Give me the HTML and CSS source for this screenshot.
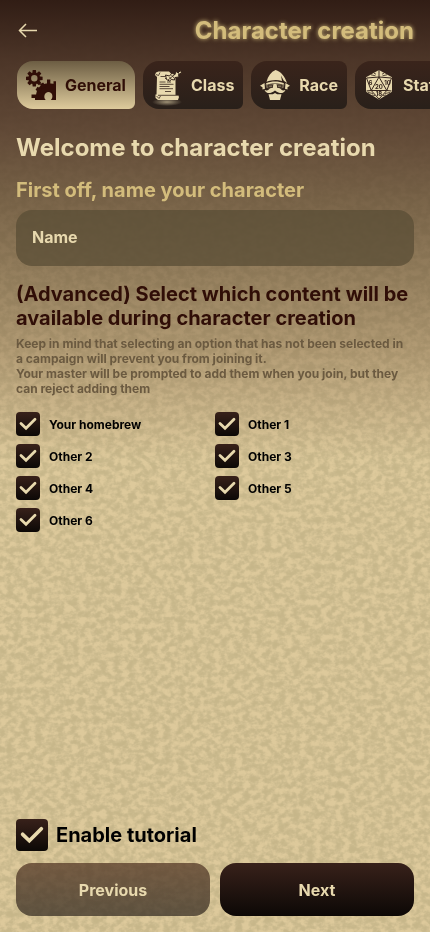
FILE: index.html
```html
<!DOCTYPE html>
<html lang="en">
<head>
<meta charset="utf-8">
<meta name="viewport" content="width=device-width, initial-scale=1">
<title>Character creation</title>
<link rel="stylesheet" href="styles.css">
</head>
<body>
<svg class="texture" aria-hidden="true">
  <filter id="parchment" x="0" y="0" width="100%" height="100%" color-interpolation-filters="sRGB">
    <feTurbulence type="fractalNoise" baseFrequency="0.14 0.17" numOctaves="3" seed="8"/>
    <feColorMatrix values="1 0 0 0 0  1 0 0 0 0  1 0 0 0 0  0 0 0 0 1"/>
    <feComponentTransfer>
      <feFuncR type="table" tableValues="0.78 0.78 0.78 0.785 0.795 0.82 0.85 0.87 0.87 0.87 0.87"/>
      <feFuncG type="table" tableValues="0.715 0.715 0.715 0.72 0.73 0.75 0.775 0.79 0.79 0.79 0.79"/>
      <feFuncB type="table" tableValues="0.54 0.54 0.54 0.545 0.555 0.575 0.595 0.61 0.61 0.61 0.61"/>
    </feComponentTransfer>
  </filter>
  <rect width="100%" height="100%" filter="url(#parchment)"/>
</svg>
<div class="shade"></div>

<div class="page">
  <header class="header">
    <button class="back" type="button" aria-label="Back">
      <svg viewBox="0 0 24 24"><path d="M21 11.500H4M10 5L3.500 11.500 10 18"/></svg>
    </button>
    <h1 class="title">Character creation</h1>
  </header>

  <nav class="tabs" aria-label="Steps">
    <button class="tab tab-active" type="button">
      <svg class="icon" viewBox="0 0 32 32">
        <defs>
          <clipPath id="gear-clip"><path d="M0 0H31V31H0z"/></clipPath>
          <path id="tooth-s" d="M7.700 1h3.200l.5 4H7.200z"/>
          <path id="tooth-l" d="M22 12.500h3.600l.6 5h-4.800z"/>
        </defs>
        <circle cx="9.300" cy="9.300" r="4.500" fill="none" stroke="currentColor" stroke-width="2.600"/>
        <g fill="currentColor">
          <use href="#tooth-s"/>
          <use href="#tooth-s" transform="rotate(45 9.300 9.300)"/>
          <use href="#tooth-s" transform="rotate(90 9.300 9.300)"/>
          <use href="#tooth-s" transform="rotate(135 9.300 9.300)"/>
          <use href="#tooth-s" transform="rotate(180 9.300 9.300)"/>
          <use href="#tooth-s" transform="rotate(225 9.300 9.300)"/>
          <use href="#tooth-s" transform="rotate(270 9.300 9.300)"/>
          <use href="#tooth-s" transform="rotate(315 9.300 9.300)"/>
        </g>
        <g clip-path="url(#gear-clip)" fill="currentColor">
          <path d="M11.500 31C9.500 22 14.500 14.500 23 14.200L31 15V31H25.800C28.800 28.500 27.500 23 23.500 23S18 28.500 20.800 31z"/>
          <path d="M22 10.500h3.300v5H22zM28.500 12.300H31V18h-2.500z"/>
          <use href="#tooth-l" transform="rotate(-30 23.800 27)"/>
          <use href="#tooth-l" transform="rotate(-58 23.800 27)"/>
          <path d="M6.500 25.500h7V29h-7zM10 29h5v2h-5z"/>
        </g>
      </svg>
      General
    </button>
    <button class="tab" type="button">
      <svg class="icon" viewBox="0 0 32 32">
        <defs>
          <radialGradient id="glow"><stop offset="0" stop-color="#ebdcb2" stop-opacity=".6"/><stop offset="1" stop-color="#ebdcb2" stop-opacity="0"/></radialGradient>
        </defs>
        <ellipse cx="16" cy="33" rx="15" ry="4" fill="url(#glow)"/>
        <path fill="currentColor" d="M5 3.500L7.500 2.500H18L24.500 9v17H5.500L6 8 4 6z"/>
        <path fill="currentColor" d="M4.500 25.500L27 26l1 2-1 3H7l-2.500-2z"/>
        <path class="cut cut-fine" d="M5 5.500l2.500 1L9 3.500M7 26.300h20M5.500 27l2.500 2.500 1.500-2.500M9.500 7.500h5M14 9.500h5"/>
        <path class="cut cut-fine" d="M8.500 13h6M16 13h4M8.500 15.300h14M8.500 17.500h10M8.500 19.700h13.500M14 22.500h6"/>
        <path fill="currentColor" stroke="#34231b" stroke-width="1" d="M15.500 10.500L14.500 6l4 1L21 4l2.500 1.500 2-3L27 4l2.500-2.500 1 2.500-3 1.500L28 8l-4 .5-.5 2.500-3-.5-2 1.500z"/>
        <path class="cut cut-fine" d="M17 11l8-6.500M20.500 6l3 3.500M18.500 8l2 2.500M27 3.500l1.500 2"/>
      </svg>
      Class
    </button>
    <button class="tab" type="button">
      <svg class="icon" viewBox="0 0 32 32">
        <g fill="currentColor">
          <path d="M7.500 12.800C9 7 12 3 16.500 1c5.500 1.500 9.500 6.500 11.500 13l-3.200-2.200L22 6.500l1 5.500C18 10.200 12.500 10.800 7.500 12.800z"/>
          <path d="M7 14.200c5.500-2.200 12.500-2.200 18 0l-.5 1.300c-5-1.500-12-1.500-17 0z"/>
          <path d="M5.500 14L1 16.700l2.500 1.600v2.200l2.500-.8zM26.500 14l4.500 2.700-2.500 1.600v2.200l-2.500-.8z"/>
          <path d="M14.500 15h3l1 4.700h-5z"/>
          <path d="M16 18.800c-3-.8-5.500.8-6.500 2-1.200 1-2.800.7-4-.1.900 3 4 4 6.500 3.100 1.600-.5 3-1.300 4-2.300 1 1 2.400 1.800 4 2.300 2.500.9 5.600-.1 6.500-3.100-1.200.8-2.800 1.100-4 .1-1-1.200-3.500-2.800-6.500-2z"/>
          <path d="M9.500 25.200h4.300L16 24l2.200 1.200h4.300L21 31H11z"/>
        </g>
        <g fill="currentColor" opacity=".4">
          <path d="M6.500 15h8v3.500l-3 1-4-.5zM17.500 15h8l-1 4-4 .5-3-1z"/>
        </g>
        <path class="cut cut-fine" d="M9 16h4.500v2.500H9.500zM18.500 16H23l-.5 2.500h-4z"/>
      </svg>
      Race
    </button>
    <button class="tab" type="button">
      <svg class="icon" viewBox="0 0 32 32">
        <path fill="currentColor" d="M16 1l13 7.300v14.400L16 30.500 3 22.700V8.300z"/>
        <path class="cut" d="M16 1v7M3.500 9L16 8l12.500 1M16 8L8.200 21.500h15.600zM3.500 9l4.700 12.500L3.500 22M28.500 9l-4.700 12.500 4.700.5M8.200 21.500L16 30l7.800-8.500"/>
        <path class="cut cut-fine" d="M8 5.800l4.500 1M24 5.800l-4.500 1M11 4.200l2 1M21 4.200l-2 1M5 23.500l5 1M27 23.500l-5 1M9 26l3 .5M23 26l-3 .5"/>
        <g class="die-text">
          <text x="16" y="19.500">20</text>
          <text x="7.500" y="15.500">6</text>
          <text x="24.500" y="15.500">10</text>
          <text x="16" y="27">18</text>
        </g>
      </svg>
      Stats
    </button>
  </nav>

  <main class="content">
    <h2 class="welcome">Welcome to character creation</h2>
    <label class="subhead" for="name">First off, name your character</label>
    <input class="name" id="name" type="text" placeholder="Name">

    <h3 class="advanced">(Advanced) Select which content will be available during character creation</h3>
    <p class="note">Keep in mind that selecting an option that has not been selected in a campaign will prevent you from joining it.<br>Your master will be prompted to add them when you join, but they can reject adding them</p>

    <div class="options">
      <label class="option"><input class="check" type="checkbox" checked>Your homebrew</label>
      <label class="option"><input class="check" type="checkbox" checked>Other 1</label>
      <label class="option"><input class="check" type="checkbox" checked>Other 2</label>
      <label class="option"><input class="check" type="checkbox" checked>Other 3</label>
      <label class="option"><input class="check" type="checkbox" checked>Other 4</label>
      <label class="option"><input class="check" type="checkbox" checked>Other 5</label>
      <label class="option"><input class="check" type="checkbox" checked>Other 6</label>
    </div>
  </main>

  <footer class="footer">
    <label class="tutorial"><input class="check check-large" type="checkbox" checked>Enable tutorial</label>
    <div class="actions">
      <button class="action action-previous" type="button">Previous</button>
      <button class="action" type="button">Next</button>
    </div>
  </footer>
</div>
</body>
</html>
```
FILE: styles.css
```css
* {
  box-sizing: border-box;
}

:root {
  --cream: #e8d9ae;
  --gold: #d3bc7c;
  --maroon: #300e07;
}

body {
  margin: 0;
  background: #d5c294;
  font-family: Inter, sans-serif;
  font-weight: 700;
  color: #000;
}

button,
input {
  margin: 0;
  border: 0;
  font: inherit;
}

.texture,
.shade {
  position: fixed;
  inset: 0;
  width: 100%;
  height: 100%;
  z-index: -1;
}

.shade {
  background: linear-gradient(rgb(49, 29, 21) 0, rgba(69, 46, 34, 0.95) 60px, rgba(84, 60, 44, 0.9) 130px, rgba(94, 72, 50, 0.78) 200px, rgba(105, 82, 56, 0.6) 280px, rgba(125, 98, 68, 0.44) 350px, rgba(140, 112, 80, 0.26) 400px, rgba(150, 120, 85, 0) 460px);
}

.page {
  display: flex;
  flex-direction: column;
  min-height: 100vh;
}

.header {
  display: flex;
  align-items: center;
  justify-content: space-between;
  padding: 16px 16px 0;
}

.back {
  display: flex;
  padding: 0;
  background: none;
  color: var(--cream);
}

.back svg {
  width: 24px;
  height: 24px;
  fill: none;
  stroke: currentColor;
  stroke-width: 1.5;
}

.title {
  margin: 0;
  font-size: 24px;
  line-height: 29px;
  color: var(--gold);
  text-shadow: 0 0 4px var(--gold);
}

.tabs {
  display: flex;
  gap: 8px;
  padding: 16px 17px 0;
  overflow: hidden;
}

.tab {
  display: flex;
  flex: none;
  align-items: center;
  gap: 8px;
  height: 48px;
  padding: 0 9px 0 8px;
  border-radius: 16px 8px 6px 16px;
  background: linear-gradient(#3a241b, #29201a);
  color: var(--cream);
  font-size: 16px;
}

.tab-active {
  border-radius: 16px 16px 6px 16px;
  background: linear-gradient(#6c5d43, #decb9c);
  color: var(--maroon);
}

.icon {
  width: 32px;
  height: 32px;
  overflow: visible;
}

.cut {
  fill: none;
  stroke: #34231b;
  stroke-width: 1;
}

.cut-fine {
  stroke-width: 0.8;
}

.die-text {
  fill: #34231b;
  font-size: 6px;
  text-anchor: middle;
}

.content {
  display: flex;
  flex: 1;
  flex-direction: column;
  padding: 24px 16px;
}

.welcome {
  margin: 0 0 16px;
  font-size: 24px;
  line-height: 29px;
  color: var(--cream);
}

.subhead {
  margin-bottom: 8px;
  font-size: 20px;
  line-height: 24px;
  color: var(--gold);
}

.name {
  width: 100%;
  height: 56px;
  padding: 0 16px 2px;
  border-radius: 16px;
  background: rgba(90, 77, 53, 0.75);
  color: var(--cream);
  font-size: 16px;
}

.name::placeholder {
  color: var(--cream);
  opacity: 1;
}

.advanced {
  margin: 16px 0 6px;
  font-size: 20px;
  line-height: 24px;
  color: var(--maroon);
}

.note {
  margin: 0 0 16px;
  padding-right: 8px;
  font-size: 12px;
  line-height: 15px;
  color: #6b5a40;
}

.options {
  display: grid;
  grid-template-columns: 1fr 1fr;
  row-gap: 8px;
}

.option {
  display: flex;
  align-items: center;
  gap: 9px;
  font-size: 12px;
}

.check {
  flex: none;
  width: 24px;
  height: 24px;
  border-radius: 4px;
  appearance: none;
  background: linear-gradient(#38211a, #0c0806);
}

.check:checked {
  background: url("data:image/svg+xml,%3Csvg xmlns='http://www.w3.org/2000/svg' viewBox='0 0 24 24'%3E%3Cpath d='M5 11.500l5 4.800 9-9' fill='none' stroke='%23e8d9ae' stroke-width='2.800' stroke-linecap='round'/%3E%3C/svg%3E") center / 100% no-repeat, linear-gradient(#38211a, #0c0806);
}

.check-large {
  width: 32px;
  height: 32px;
}

.footer {
  padding: 0 16px 16px;
}

.tutorial {
  display: flex;
  align-items: center;
  gap: 8px;
  margin-bottom: 12px;
  font-size: 20px;
}

.actions {
  display: grid;
  grid-template-columns: 1fr 1fr;
  gap: 10px;
}

.action {
  height: 53px;
  border-radius: 16px;
  background: linear-gradient(#38211a, #0c0806);
  color: var(--cream);
  font-size: 16px;
}

.action-previous {
  background: linear-gradient(rgba(84, 56, 38, 0.75), rgba(55, 46, 36, 0.75));
}
```
